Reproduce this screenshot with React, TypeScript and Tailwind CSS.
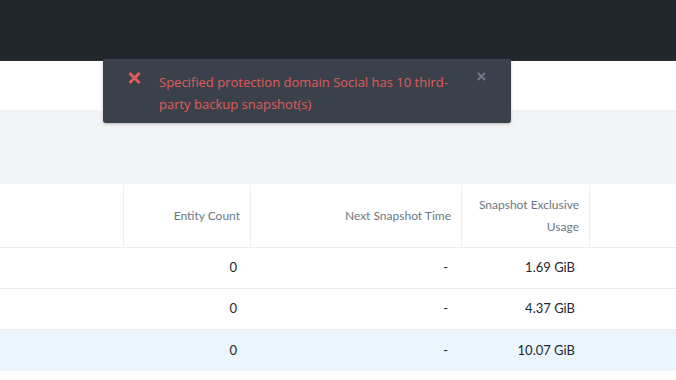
import React from "react";

const rows = [
  { count: "0", next: "-", usage: "1.69 GiB", hl: false },
  { count: "0", next: "-", usage: "4.37 GiB", hl: false },
  { count: "0", next: "-", usage: "10.07 GiB", hl: true },
];

export default function App() {
  return (
    <div
      className="relative w-[676px] h-[380px] overflow-hidden bg-white"
      style={{ fontFamily: "Lato, 'Open Sans', sans-serif" }}
    >
      <div className="h-[61px] bg-[#22272e] border-b border-[#2b3138]" />
      <div className="h-[49px] bg-white" />
      <div className="h-[74px] bg-[#f2f3f5]" />
      {/* header */}
      <div className="flex h-[64px] border-b border-[#eceef1] text-[12px] text-[#6b7785]">
        <div className="w-[124px] border-r border-[#eceef1] my-[1px]" />
        <div className="w-[127px] border-r border-[#eceef1] my-[1px] flex items-center justify-end pr-[10px]">
          Entity Count
        </div>
        <div className="w-[211px] border-r border-[#eceef1] my-[1px] flex items-center justify-end pr-[10px]">
          Next Snapshot Time
        </div>
        <div className="w-[128px] border-r border-[#eceef1] my-[1px] flex items-center justify-end pr-[10px] text-right leading-[22px]">
          Snapshot Exclusive
          <br />
          Usage
        </div>
        <div className="flex-1" />
      </div>
      {rows.map((r, i) => (
        <div
          key={i}
          className={`flex h-[41px] items-center text-[13px] text-[#22272e] ${
            r.hl ? "bg-[#eaf5fc]" : "border-b border-[#eceef1]"
          }`}
        >
          <div className="w-[124px]" />
          <div className="w-[127px] text-right pr-[14px]">{r.count}</div>
          <div className="w-[211px] text-right pr-[14px]">{r.next}</div>
          <div className="w-[128px] text-right pr-[15px]">{r.usage}</div>
        </div>
      ))}

      {/* toast */}
      <div className="absolute left-[103px] top-[59px] w-[408px] h-[64px] bg-[#3a414a] rounded-b-[3px] shadow-[0_1px_3px_rgba(0,0,0,0.25)] flex">
        <div className="w-[56px] pl-[25px] pt-[13px]">
          <svg width="13" height="12" viewBox="0 0 13 12">
            <path d="M1.5 1 L11.5 11 M11.5 1 L1.5 11" stroke="#e45c5c" strokeWidth="2.8" strokeLinecap="butt" />
          </svg>
        </div>
        <div className="w-[305px] pt-[12px] text-[13px] leading-[22px] text-[#e05a5a]" style={{ fontFamily: "'Open Sans', sans-serif" }}>
          Specified protection domain Social has 10 third-party backup snapshot(s)
        </div>
        <div className="pl-[13px] pt-[13px]">
          <svg width="9" height="9" viewBox="0 0 9 9">
            <path d="M1 1 L8 8 M8 1 L1 8" stroke="#6e7a89" strokeWidth="2" />
          </svg>
        </div>
      </div>
    </div>
  );
}
